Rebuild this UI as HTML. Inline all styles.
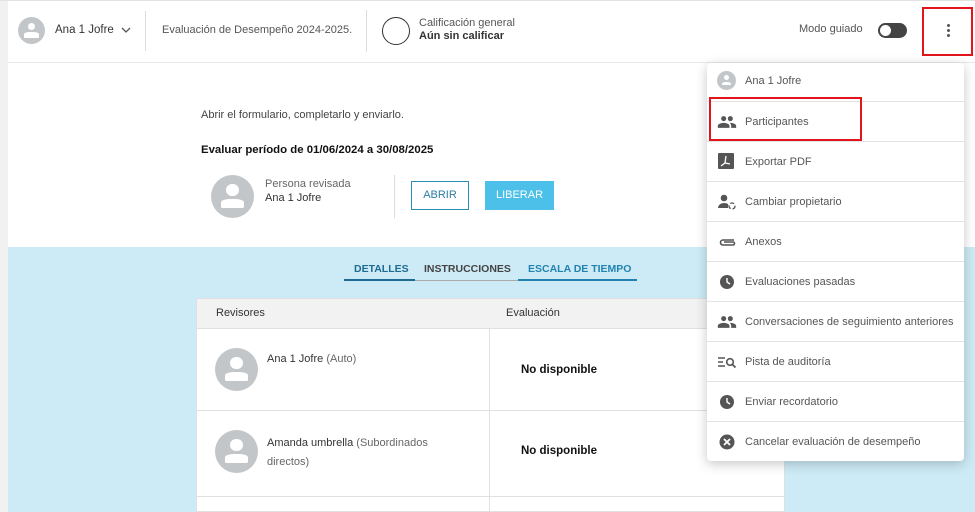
<!DOCTYPE html>
<html><head><meta charset="utf-8"><style>
*{box-sizing:border-box;margin:0;padding:0}
body{width:975px;height:512px;overflow:hidden;position:relative;background:#fff;font-family:"Liberation Sans",sans-serif;color:#333;font-size:11px}
.abs{position:absolute;white-space:nowrap}
.av{position:absolute;border-radius:50%;background:#c3c6c9;overflow:hidden}
.av::before{content:"";position:absolute;left:36%;top:22%;width:28%;height:28%;border-radius:50%;background:#fff}
.av::after{content:"";position:absolute;left:24%;top:56%;width:52%;height:20%;border-radius:40% 40% 10% 10%;background:#fff}
.mi{position:absolute;left:707px;width:257px;height:40px;border-top:1px solid #e3e3e3;font-size:11px;color:#555;line-height:40px;padding-left:38px;white-space:nowrap}
.mi svg{position:absolute;left:10px;top:10px}
</style></head><body>
<div class="abs" style="left:0;top:0;width:8px;height:512px;background:#f1f1f1"></div>
<div class="abs" style="left:0;top:0;width:975px;height:1px;background:#e2e2e2"></div>
<div class="abs" style="left:8px;top:62px;width:967px;height:1px;background:#e8e8e8"></div>
<!-- header -->
<div class="av" style="left:18px;top:17px;width:27px;height:27px"></div>
<div class="abs" style="left:55px;top:24px;font-size:11.5px;color:#333">Ana 1 Jofre</div>
<svg class="abs" style="left:121px;top:27px" width="10" height="7"><path d="M1 1l4 4 4-4" stroke="#555" fill="none" stroke-width="1.3"/></svg>
<div class="abs" style="left:145px;top:11px;width:1px;height:40px;background:#ddd"></div>
<div class="abs" style="left:162px;top:24px;color:#555">Evaluación de Desempeño 2024-2025.</div>
<div class="abs" style="left:366px;top:10px;width:1px;height:42px;background:#ddd"></div>
<div class="abs" style="left:382px;top:17px;width:28px;height:28px;border:1.5px solid #333;border-radius:50%"></div>
<div class="abs" style="left:419px;top:17px;color:#555;line-height:13px">Calificación general<br><b style="color:#333">Aún sin calificar</b></div>
<div class="abs" style="left:799px;top:23px;color:#555">Modo guiado</div>
<div class="abs" style="left:878px;top:23px;width:29px;height:15px;border-radius:8px;background:#444"></div>
<div class="abs" style="left:880px;top:25px;width:11px;height:11px;border-radius:50%;background:#fff"></div>
<div class="abs" style="left:922px;top:7px;width:51px;height:49px;border:2px solid #e3141b"></div>
<div class="abs" style="left:947px;top:24px;width:3px;height:3px;border-radius:50%;background:#555;box-shadow:0 5px 0 #555,0 10px 0 #555"></div>
<!-- body top -->
<div class="abs" style="left:201px;top:109px;color:#444">Abrir el formulario, completarlo y enviarlo.</div>
<div class="abs" style="left:201px;top:144px;font-size:11.4px;font-weight:bold;color:#111">Evaluar período de 01/06/2024 a 30/08/2025</div>
<div class="av" style="left:211px;top:175px;width:43px;height:43px"></div>
<div class="abs" style="left:265px;top:177px;color:#666;line-height:14px">Persona revisada<br><span style="color:#333">Ana 1 Jofre</span></div>
<div class="abs" style="left:394px;top:175px;width:1px;height:43px;background:#ddd"></div>
<div class="abs" style="left:411px;top:181px;width:58px;height:29px;border:1px solid #2a8db5;color:#2a7ea5;font-size:11px;text-align:center;line-height:27px">ABRIR</div>
<div class="abs" style="left:485px;top:181px;width:69px;height:29px;background:#4cc0e8;color:#fff;font-size:11px;text-align:center;line-height:29px">LIBERAR</div>
<!-- blue -->
<div class="abs" style="left:8px;top:247px;width:967px;height:265px;background:#cdebf6"></div>
<div class="abs" style="left:354px;top:263px;font-size:10.5px;font-weight:bold;color:#1d6b92">DETALLES</div>
<div class="abs" style="left:424px;top:263px;font-size:10.5px;font-weight:bold;color:#444">INSTRUCCIONES</div>
<div class="abs" style="left:528px;top:263px;font-size:10.5px;font-weight:bold;color:#2283b0">ESCALA DE TIEMPO</div>
<div class="abs" style="left:344px;top:280px;width:293px;height:1px;background:#aaa"></div>
<div class="abs" style="left:344px;top:279px;width:71px;height:2px;background:#1d6b92"></div>
<div class="abs" style="left:518px;top:279px;width:119px;height:2px;background:#2283b0"></div>
<!-- table -->
<div class="abs" style="left:196px;top:298px;width:589px;height:214px;background:#fff;border:1px solid #e0e0e0"></div>
<div class="abs" style="left:197px;top:299px;width:587px;height:30px;background:#f2f2f2;border-bottom:1px solid #e0e0e0"></div>
<div class="abs" style="left:216px;top:307px;color:#333">Revisores</div>
<div class="abs" style="left:506px;top:307px;color:#333">Evaluación</div>
<div class="abs" style="left:489px;top:329px;width:1px;height:183px;background:#e0e0e0"></div>
<div class="abs" style="left:197px;top:410px;width:587px;height:1px;background:#e0e0e0"></div>
<div class="abs" style="left:197px;top:496px;width:587px;height:1px;background:#e0e0e0"></div>
<div class="av" style="left:215px;top:348px;width:43px;height:43px"></div>
<div class="abs" style="left:267px;top:353px;color:#333">Ana 1 Jofre <span style="color:#666">(Auto)</span></div>
<div class="abs" style="left:521px;top:364px;font-size:11.5px;font-weight:bold;color:#111">No disponible</div>
<div class="av" style="left:215px;top:430px;width:43px;height:43px"></div>
<div class="abs" style="left:267px;top:434px;color:#333;line-height:19px;width:200px;white-space:normal">Amanda umbrella <span style="color:#666">(Subordinados directos)</span></div>
<div class="abs" style="left:521px;top:445px;font-size:11.5px;font-weight:bold;color:#111">No disponible</div>
<!-- menu -->
<div class="abs" style="left:707px;top:63px;width:257px;height:398px;background:#fff;border-radius:4px;box-shadow:0 3px 12px rgba(0,0,0,.22)"></div>
<div class="mi" style="top:61px;border-top:none"><span class="av" style="left:10px;top:10px;width:19px;height:19px"></span>Ana 1 Jofre</div>
<div class="mi" style="top:101px"><svg width="20" height="20" viewBox="0 0 24 24"><path fill="#555" d="M16 11c1.7 0 3-1.3 3-3s-1.3-3-3-3-3 1.3-3 3 1.3 3 3 3zm-8 0c1.7 0 3-1.3 3-3S9.7 5 8 5 5 6.3 5 8s1.3 3 3 3zm0 2c-2.3 0-7 1.2-7 3.5V19h14v-2.5C15 14.2 10.3 13 8 13zm8 0c-.3 0-.6 0-1 .1 1.2.8 2 2 2 3.4V19h6v-2.5c0-2.3-4.7-3.5-7-3.5z"/></svg>Participantes</div>
<div class="mi" style="top:141px"><svg width="18" height="18" viewBox="0 0 18 18"><rect x="1" y="1" width="16" height="16" rx="1" fill="#555"/><path d="M4 14l4-3 5 1M8 11l1-7" stroke="#fff" stroke-width="1.3" fill="none"/></svg>Exportar PDF</div>
<div class="mi" style="top:181px"><svg width="20" height="20" viewBox="0 0 20 20"><circle cx="7" cy="6" r="3.3" fill="#555"/><path d="M1 16c0-3 3-5 6-5 2 0 3 .5 4 1v4z" fill="#555"/><circle cx="15" cy="14" r="3" stroke="#555" stroke-width="1.3" fill="none" stroke-dasharray="4 2"/></svg>Cambiar propietario</div>
<div class="mi" style="top:221px"><svg width="20" height="20" viewBox="0 0 20 20"><path d="M17 8H6a2.5 2.5 0 000 5h10a1.5 1.5 0 000-3H7" stroke="#555" stroke-width="1.6" fill="none"/></svg>Anexos</div>
<div class="mi" style="top:261px"><svg width="20" height="20" viewBox="0 0 20 20"><circle cx="10" cy="10" r="7" fill="#555"/><path d="M10 6v4l3 2" stroke="#fff" stroke-width="1.4" fill="none"/></svg>Evaluaciones pasadas</div>
<div class="mi" style="top:301px"><svg width="20" height="20" viewBox="0 0 24 24"><path fill="#555" d="M16 11c1.7 0 3-1.3 3-3s-1.3-3-3-3-3 1.3-3 3 1.3 3 3 3zm-8 0c1.7 0 3-1.3 3-3S9.7 5 8 5 5 6.3 5 8s1.3 3 3 3zm0 2c-2.3 0-7 1.2-7 3.5V19h14v-2.5C15 14.2 10.3 13 8 13zm8 0c-.3 0-.6 0-1 .1 1.2.8 2 2 2 3.4V19h6v-2.5c0-2.3-4.7-3.5-7-3.5z"/></svg>Conversaciones de seguimiento anteriores</div>
<div class="mi" style="top:341px"><svg width="20" height="20" viewBox="0 0 20 20"><path d="M1 6h7M1 10h5M1 14h7" stroke="#555" stroke-width="1.4"/><circle cx="13" cy="10" r="3.3" stroke="#555" stroke-width="1.6" fill="none"/><path d="M15.5 12.5l3 3" stroke="#555" stroke-width="1.8"/></svg>Pista de auditoría</div>
<div class="mi" style="top:381px"><svg width="20" height="20" viewBox="0 0 20 20"><circle cx="10" cy="10" r="7" fill="#555"/><path d="M10 6v4l3 2" stroke="#fff" stroke-width="1.4" fill="none"/></svg>Enviar recordatorio</div>
<div class="mi" style="top:421px"><svg width="20" height="20" viewBox="0 0 20 20"><circle cx="10" cy="10" r="7.5" fill="#555"/><path d="M7 7l6 6M13 7l-6 6" stroke="#fff" stroke-width="1.8"/></svg>Cancelar evaluación de desempeño</div>
<div class="abs" style="left:709px;top:97px;width:153px;height:44px;border:2px solid #e3141b"></div>
</body></html>
